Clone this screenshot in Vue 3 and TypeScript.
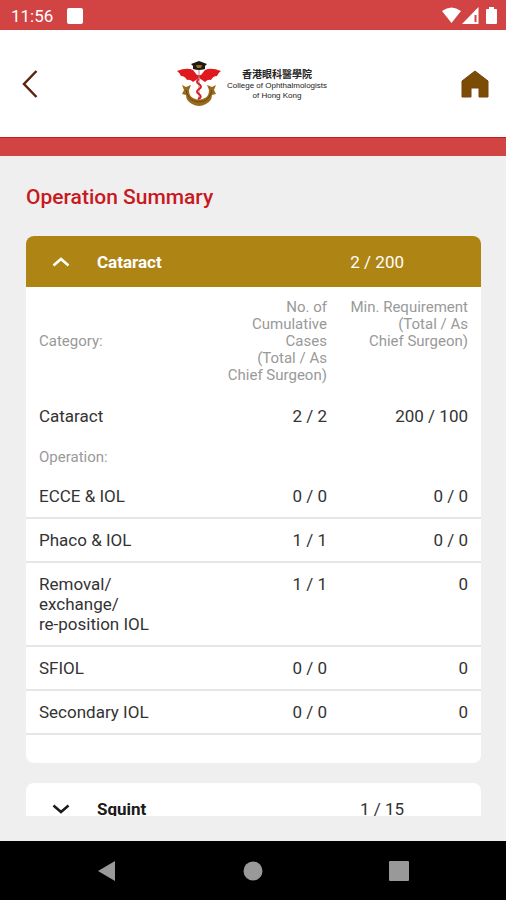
<script setup lang="ts">
import { ref } from 'vue'

interface Row {
  name: string
  cases: string
  requirement: string
}

interface Section {
  id: string
  title: string
  total: string
  category: Row
  operations: Row[]
}

const sections: Section[] = [
  {
    id: 'cataract',
    title: 'Cataract',
    total: '2 / 200',
    category: { name: 'Cataract', cases: '2 / 2', requirement: '200 / 100' },
    operations: [
      { name: 'ECCE & IOL', cases: '0 / 0', requirement: '0 / 0' },
      { name: 'Phaco & IOL', cases: '1 / 1', requirement: '0 / 0' },
      { name: 'Removal/\nexchange/\nre-position IOL', cases: '1 / 1', requirement: '0' },
      { name: 'SFIOL', cases: '0 / 0', requirement: '0' },
      { name: 'Secondary IOL', cases: '0 / 0', requirement: '0' },
    ],
  },
  {
    id: 'squint',
    title: 'Squint',
    total: '1 / 15',
    category: { name: 'Squint', cases: '1 / 1', requirement: '15' },
    operations: [],
  },
]

const casesLabel = 'No. of\nCumulative\nCases\n(Total / As\nChief Surgeon)'
const requirementLabel = 'Min. Requirement\n(Total / As\nChief Surgeon)'

const openId = ref<string | null>('cataract')

function toggle(id: string): void {
  openId.value = openId.value === id ? null : id
}
</script>

<template>
  <div class="screen">
    <div class="status">
      <span class="clock">11:56</span>
      <span class="notice"></span>
      <svg class="signals" viewBox="0 0 56 18" aria-hidden="true">
        <path d="M0 4 Q9.500 -3 19 4 L9.500 16 Z" />
        <path fill-rule="evenodd" d="M20 17 L36.500 0 V17 Z M32.500 8 V15 H34.500 V8 Z" />
        <path d="M47 0 h5 v2 h2 q1 0 1 1 v13 q0 1 -1 1 h-9 q-1 0 -1 -1 v-13 q0 -1 1 -1 h2 z" />
      </svg>
    </div>

    <header class="header">
      <button class="icon-button" type="button" aria-label="Back">
        <svg class="back" viewBox="0 0 16 28" aria-hidden="true">
          <path d="M14.500 1 L2 14 L14.500 27" />
        </svg>
      </button>
      <div class="brand">
        <svg class="crest" viewBox="0 0 44 46" aria-hidden="true">
          <path class="gold" d="M5 24 L9 26 L14 24 L12 29 Q12 35 16 37 Q22 40 28 37 Q32 35 32 29 L30 24 L35 26 L39 24 L37 29 L39 33 L35 34 Q35 40 29 43 Q22 47 15 43 Q9 40 9 34 L5 33 L7 29 Z" />
          <path class="gold-line" d="M9 29 Q11 38 17 40 Q22 42 27 40 Q33 38 35 29" />
          <path class="red" d="M0 10 Q10 6 16 9 L20 14 H24 L28 9 Q34 6 44 10 Q41 12 40 15 Q36 15 34 19 Q31 18 28 21 L22 17 L16 21 Q13 18 10 19 Q8 15 4 15 Q3 12 0 10 Z" />
          <path class="staff" d="M22 9 V37" />
          <path class="snake" d="M22 18 Q18 21 22 23 Q26 26 22 28 Q18 31 22 33 Q26 36 21 38" />
          <path class="black" d="M14 3 L22 0 L30 3 L28 5 V8 Q22 10 16 8 V5 Z" />
          <path class="gold" d="M19 4 h6 l-1 3 h-4 z" />
        </svg>
        <div class="brand-text">
          <span class="brand-cn">香港眼科醫學院</span>
          <span>College of Ophthalmologists</span>
          <span>of Hong Kong</span>
        </div>
      </div>
      <button class="icon-button" type="button" aria-label="Home">
        <svg class="home" viewBox="0 0 28 28" aria-hidden="true">
          <path d="M14 1 L27 11 V27 H18 V18 H10 V27 H1 V11 Z" />
        </svg>
      </button>
    </header>
    <div class="band"></div>

    <main class="main">
      <h1 class="title">Operation Summary</h1>
      <div class="list">
        <section
          v-for="section in sections"
          :key="section.id"
          class="card"
          :class="{ open: openId === section.id }"
        >
          <button
            class="card-head"
            type="button"
            :aria-expanded="openId === section.id"
            @click="toggle(section.id)"
          >
            <svg class="chevron" viewBox="0 0 18 10" aria-hidden="true">
              <path v-if="openId === section.id" d="M1.500 8.500 L9 2 L16.500 8.500" />
              <path v-else d="M1.500 1.500 L9 8 L16.500 1.500" />
            </svg>
            <span class="card-title">{{ section.title }}</span>
            <span>{{ section.total }}</span>
          </button>
          <table v-if="openId === section.id" class="table">
            <colgroup>
              <col class="col-name" />
              <col class="col-cases" />
              <col class="col-min" />
            </colgroup>
            <thead>
              <tr>
                <th class="category" scope="col">Category:</th>
                <th class="num" scope="col">{{ casesLabel }}</th>
                <th class="num" scope="col">{{ requirementLabel }}</th>
              </tr>
            </thead>
            <tbody>
              <tr>
                <td>{{ section.category.name }}</td>
                <td class="num">{{ section.category.cases }}</td>
                <td class="num">{{ section.category.requirement }}</td>
              </tr>
              <tr>
                <th class="group" colspan="3" scope="rowgroup">Operation:</th>
              </tr>
              <tr v-for="row in section.operations" :key="row.name" class="lined">
                <td>{{ row.name }}</td>
                <td class="num">{{ row.cases }}</td>
                <td class="num">{{ row.requirement }}</td>
              </tr>
            </tbody>
          </table>
        </section>
      </div>
    </main>

    <nav class="nav">
      <button class="nav-button" type="button" aria-label="System back">
        <svg viewBox="0 0 20 22" aria-hidden="true"><path d="M18 1 V21 L1 11 Z" /></svg>
      </button>
      <button class="nav-button" type="button" aria-label="System home">
        <svg viewBox="0 0 20 22" aria-hidden="true"><circle cx="10" cy="11" r="9.500" /></svg>
      </button>
      <button class="nav-button" type="button" aria-label="Recent apps">
        <svg viewBox="0 0 20 22" aria-hidden="true"><rect x="0" y="1" width="20" height="20" rx="1" /></svg>
      </button>
    </nav>
  </div>
</template>

<style>
body {
  margin: 0;
}
</style>

<style scoped>
.screen {
  display: flex;
  flex-direction: column;
  height: 100vh;
  background: #efefef;
  font-family: Roboto, "Noto Sans CJK TC", sans-serif;
  font-size: 17px;
  line-height: 20px;
  color: #333;
}

button {
  margin: 0;
  padding: 0;
  border: 0;
  background: none;
  font: inherit;
  color: inherit;
  cursor: pointer;
}

svg {
  display: block;
}

.status {
  display: flex;
  align-items: center;
  gap: 14px;
  box-sizing: border-box;
  height: 30px;
  padding: 1px 8px 0 11px;
  background: #d24343;
  color: #fff;
}

.notice {
  width: 16px;
  height: 16px;
  border-radius: 2px;
  background: #fff;
}

.signals {
  width: 56px;
  height: 18px;
  margin-left: auto;
  fill: #fff;
}

.header {
  display: flex;
  align-items: center;
  justify-content: space-between;
  box-sizing: border-box;
  height: 107px;
  padding: 0 16px 0 22px;
  background: #fff;
}

.icon-button {
  display: flex;
}

.back {
  width: 16px;
  height: 28px;
  fill: none;
  stroke: #5a2410;
  stroke-width: 2.5;
}

.home {
  width: 30px;
  height: 28px;
  fill: #7a4c05;
  stroke: #7a4208;
  stroke-width: 1;
}

.brand {
  display: flex;
  align-items: center;
  gap: 6px;
  margin-left: 6px;
}

.crest {
  width: 44px;
  height: 46px;
}

.gold {
  fill: #9a6a1c;
}

.gold-line {
  fill: none;
  stroke: #6b4410;
  stroke-width: 1;
}

.red {
  fill: #e0191f;
}

.staff {
  fill: none;
  stroke: #c08080;
  stroke-width: 1;
}

.snake {
  fill: none;
  stroke: #d4202a;
  stroke-width: 2;
}

.black {
  fill: #201a14;
}

.brand-text {
  display: flex;
  flex-direction: column;
  align-items: center;
  padding-top: 2px;
  font-family: "Liberation Sans", "Noto Sans CJK TC", sans-serif;
  font-size: 8px;
  line-height: 10px;
  color: #222;
}

.brand-cn {
  font-size: 10px;
  line-height: 12px;
  font-weight: 700;
}

.band {
  height: 19px;
  background: #d24343;
  border-top: 1px solid #c8191f;
  box-sizing: border-box;
}

.main {
  display: flex;
  flex: 1;
  flex-direction: column;
  gap: 26px;
  min-height: 0;
  padding: 29px 25px 25px 26px;
}

.title {
  margin: 0;
  font-size: 21px;
  line-height: 25px;
  font-weight: 500;
  color: #c8191f;
}

.list {
  display: flex;
  flex: 1;
  flex-direction: column;
  gap: 20px;
  min-height: 0;
  overflow: hidden;
}

.card {
  flex-shrink: 0;
  border-radius: 8px;
  background: #fff;
  overflow: hidden;
}

.card.open {
  padding-bottom: 28px;
}

.card-head {
  display: flex;
  align-items: center;
  width: 100%;
  height: 51px;
  padding: 0 77px 0 26px;
  text-align: left;
}

.open .card-head {
  background: #ae8415;
  color: #fff;
}

.chevron {
  width: 18px;
  height: 10px;
  margin-right: 27px;
  fill: none;
  stroke: currentColor;
  stroke-width: 2.5;
}

.card-title {
  flex: 1;
  font-weight: 700;
}

.card:not(.open) .card-title,
.card:not(.open) .chevron {
  color: #1a1a1a;
}

.table {
  width: 100%;
  border-collapse: separate;
  border-spacing: 0;
  table-layout: fixed;
}

.col-name {
  width: 41%;
}

.col-cases {
  width: 28%;
}

.col-min {
  width: 31%;
}

th,
td {
  padding: 11px 13px;
  text-align: left;
  vertical-align: top;
  white-space: pre-line;
}

th {
  padding-top: 12px;
  font-size: 15px;
  line-height: 17px;
  font-weight: 400;
  color: #999;
}

.category {
  vertical-align: middle;
}

.group {
  padding-bottom: 9px;
}

.num {
  padding-left: 0;
  text-align: right;
}

.lined td {
  border-bottom: 2px solid #e6e6e6;
}

.nav {
  display: flex;
  align-items: center;
  justify-content: center;
  gap: 126px;
  height: 59px;
  background: #000;
}

.nav-button svg {
  width: 20px;
  height: 22px;
  fill: #999;
}
</style>
